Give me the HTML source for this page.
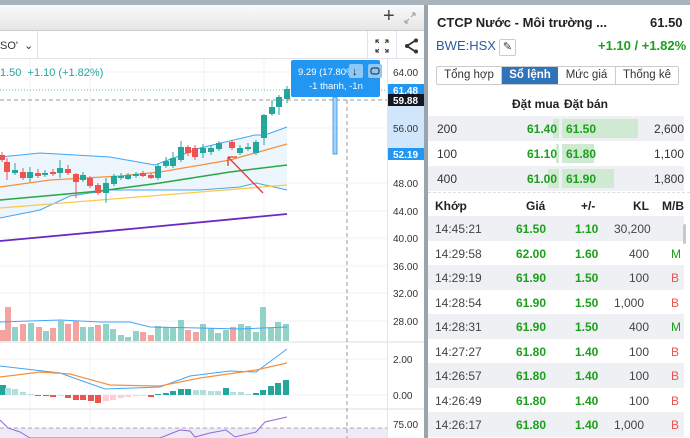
<!DOCTYPE html>
<html><head><meta charset="utf-8"><style>
*{margin:0;padding:0;box-sizing:border-box}
body{width:690px;height:438px;overflow:hidden;background:#a9b3bc;font-family:"Liberation Sans",sans-serif;position:relative}
.abs{position:absolute}
#left{left:0;top:5px;width:424px;height:433px;background:#fff}
#hdr{left:0;top:0;width:424px;height:26px;background:linear-gradient(#fafafa,#e6e6e6);border-bottom:1px solid #ccc}
#tb{left:0;top:26px;width:424px;height:28px;background:#fff;border-bottom:1px solid #e0e3eb}
#right{left:428px;top:5px;width:262px;height:433px;background:#fff}
.t{position:absolute;white-space:nowrap}
.g{color:#1aa01a;font-weight:bold}
.row{position:absolute;left:0;width:256px;height:24.5px;font-size:12px}
.row span{position:absolute;top:6px}
</style></head><body>
<div id="left" class="abs">
 <div id="hdr" class="abs">
  <div class="t" style="left:383px;top:0;font-size:20px;color:#444">+</div>
  <svg class="abs" style="left:403px;top:6px" width="14" height="14"><path d="M2 12 L6 8 M2 12 L2 9 M2 12 L5 12 M12 2 L8 6 M12 2 L9 2 M12 2 L12 5" stroke="#aaa" stroke-width="1.3" fill="none"/></svg>
 </div>
 <div id="tb" class="abs">
  <div class="t" style="left:0;top:8px;font-size:11px;color:#333">SO' &nbsp;⌄</div>
  <div class="abs" style="left:37px;top:0;width:1px;height:28px;background:#e0e3eb"></div>
  <div class="abs" style="left:367px;top:0;width:1px;height:28px;background:#e0e3eb"></div>
  <div class="abs" style="left:396px;top:0;width:1px;height:28px;background:#e0e3eb"></div>
  <svg class="abs" style="left:375px;top:8px" width="14" height="14"><path d="M1 4V1H4M10 1H13V4M13 10V13H10M4 13H1V10M1 1L4 4M13 1L10 4M13 13L10 10M1 13L4 10" stroke="#333" stroke-width="1.1" fill="none"/></svg>
  <svg class="abs" style="left:404px;top:7px" width="14" height="16"><path d="M12 2L3 8L12 14" stroke="#333" stroke-width="1.8" fill="none"/><circle cx="12" cy="2.5" r="2" fill="#333"/><circle cx="3" cy="8" r="2" fill="#333"/><circle cx="12" cy="13.5" r="2" fill="#333"/></svg>
 </div>
</div>
<div class="abs" style="left:424px;top:5px;width:4px;height:433px;background:#9aa4ad"></div>
<svg class="abs" style="left:0;top:0" width="424" height="438">
 <g stroke="#f0f2f5" stroke-width="1">
  <path d="M30 59V438M90 59V438M204 59V438M264 59V438"/>
  <path d="M0 72H387M0 128H387M0 183H387M0 211H387M0 238H387M0 266H387M0 293H387M0 321H387M0 359H387M0 395H387"/>
 </g>
 <path d="M0 342H424M0 409H424" stroke="#ddd"/>
 <rect x="387" y="59" width="1" height="379" fill="#e0e3eb"/>
 <rect x="388" y="84" width="36" height="76" fill="#cfe6fb"/>
 <rect x="0" y="428" width="387" height="10" fill="#efeaf8"/>
 <path d="M0 428H387" stroke="#aaa" stroke-dasharray="4 3"/>
 <path d="M0 90H387" stroke="#26a69a" stroke-dasharray="1 2" opacity=".7"/>
 <path d="M0 100H387" stroke="#999" stroke-dasharray="4 3"/>
 <path d="M347 100V438" stroke="#999" stroke-dasharray="4 3"/>
 <rect x="333" y="97" width="4" height="57" fill="#a8d3f7" stroke="#2196f3" stroke-width=".8"/>
 <path d="M0 157 L40 153 L110 157 L155 165 L200 148 L255 135 L265 135 L287 127 L287 190 L256 183 L240 187 L200 190 L110 190 L70 196 L40 210 L0 218Z" fill="#e8f3fd" opacity=".8"/>
 <polyline points="0,157 40,153 110,157 155,165 200,148 255,135 265,135 287,127" fill="none" stroke="#42a5f5" stroke-width="1"/>
 <polyline points="0,218 40,210 70,196 110,190 200,190 240,187 256,183 287,190" fill="none" stroke="#42a5f5" stroke-width="1"/>
 <polyline points="0,187 50,180 120,176 160,172 230,160 287,144" fill="none" stroke="#f7913d" stroke-width="1.3"/>
 <polyline points="0,200 100,191 160,183 230,172 287,165" fill="none" stroke="#28a745" stroke-width="1.5"/>
 <polyline points="0,208 100,200 200,192 287,185" fill="none" stroke="#fbc94b" stroke-width="1.3"/>
 <polyline points="0,241 130,229 287,214" fill="none" stroke="#6a2ac0" stroke-width="1.8"/>
 <g id="candles"></g>
 <path d="M263 193 L228 157 M228 157 L228 166 M228 157 L237 157" stroke="#e53935" stroke-width="1.3" fill="none"/>
 <polyline points="0,322 60,320 100,322 130,322 150,327 200,328 240,329 287,327" fill="none" stroke="#42a5f5" stroke-width="1"/>
 <polyline points="0,366 60,373 105,389 160,387 190,376 230,371 256,372 287,349" fill="none" stroke="#42a5f5" stroke-width="1"/>
 <polyline points="0,377 40,372 70,374 110,385 160,386 200,378 256,370 287,363" fill="none" stroke="#f7913d" stroke-width="1.2"/>
 <polyline points="0,420 8,428 20,432 30,438 160,438 180,430 190,431 195,437 210,433 226,430 235,437 256,432 265,422 287,417" fill="none" stroke="#8e6bd8" stroke-width="1"/>
 <g font-size="10" fill="#333" font-family="Liberation Sans">
  <text x="393" y="76">64.00</text><text x="393" y="132">56.00</text><text x="393" y="187">48.00</text><text x="393" y="215">44.00</text><text x="393" y="242">40.00</text><text x="393" y="270">36.00</text><text x="393" y="297">32.00</text><text x="393" y="325">28.00</text><text x="393" y="363">2.00</text><text x="393" y="399">0.00</text><text x="393" y="428">75.00</text>
 </g>
 <rect x="388" y="84" width="36" height="13" fill="#2196f3"/><text x="393" y="94" font-size="10" fill="#fff" font-weight="bold">61.48</text>
 <rect x="388" y="94" width="36" height="12" fill="#131722"/><text x="393" y="104" font-size="10" fill="#fff" font-weight="bold">59.88</text>
 <rect x="388" y="148" width="36" height="12" fill="#2196f3"/><text x="393" y="158" font-size="10" fill="#fff" font-weight="bold">52.19</text>
 <rect x="291" y="60" width="89" height="37" rx="2" fill="#2196f3"/>
 <text x="298" y="75" font-size="9.5" fill="#fff">9.29 (17.80%</text>
 <text x="309" y="89" font-size="9.5" fill="#fff">-1 thanh, -1n</text>
 <rect x="349" y="64" width="14" height="14" rx="2" fill="#8ec8f7"/><text x="352" y="75" font-size="11" fill="#222">↓</text>
 <rect x="368" y="64" width="14" height="14" rx="2" fill="#8ec8f7"/><rect x="371" y="68" width="8" height="6" rx="2" fill="none" stroke="#222"/>
 <text x="0" y="76" font-size="11" fill="#26a69a">1.50 &#160;+1.10 (+1.82%)</text>
</svg>
<script>
var C=[[2,155,160,152,162,'r'],[7,162,172,158,180,'r'],[15,170,173,163,175,'g'],[23,172,178,168,180,'r'],[30,172,178,167,182,'g'],[38,173,176,169,178,'r'],[45,173,175,170,177,'g'],[53,172,174,169,176,'r'],[60,168,173,160,178,'g'],[68,169,173,165,175,'r'],[76,174,182,173,198,'r'],[83,175,180,172,182,'g'],[90,178,186,176,188,'r'],[98,185,193,183,195,'r'],[106,183,193,178,203,'g'],[114,176,184,174,186,'g'],[121,176,178,173,180,'g'],[128,175,179,173,180,'g'],[136,174,176,172,178,'g'],[143,173,176,171,177,'r'],[151,175,178,173,179,'r'],[158,166,178,164,180,'g'],[166,161,166,157,168,'g'],[173,158,166,152,168,'g'],[181,147,160,141,162,'g'],[188,147,153,145,156,'r'],[195,148,157,145,160,'r'],[203,148,153,144,158,'g'],[211,148,152,145,155,'g'],[219,143,149,141,151,'g'],[232,142,148,140,150,'r'],[240,148,153,145,155,'g'],[248,147,149,143,151,'g'],[256,142,153,140,155,'g'],[264,115,138,114,145,'g'],[272,107,114,100,116,'g'],[279,97,107,95,115,'g'],[287,89,99,86,103,'g']];
var V=[[0,330,'r'],[5,307,'r'],[12,327,'g'],[20,324,'r'],[28,323,'g'],[36,327,'r'],[43,331,'g'],[50,328,'r'],[58,321,'g'],[65,324,'r'],[73,321,'r'],[80,327,'g'],[88,327,'g'],[95,325,'r'],[103,324,'g'],[110,329,'g'],[118,335,'g'],[125,337,'g'],[133,331,'g'],[140,332,'r'],[148,335,'r'],[155,326,'g'],[163,327,'g'],[170,327,'g'],[178,320,'g'],[185,330,'r'],[193,332,'r'],[200,324,'g'],[208,328,'g'],[215,333,'g'],[223,330,'g'],[230,327,'r'],[238,324,'g'],[245,326,'g'],[253,332,'g'],[260,307,'g'],[268,328,'g'],[275,322,'g'],[283,324,'g']];
var M=[[0,385,'#26a69a'],[5,388,'#b2dfdb'],[12,389,'#b2dfdb'],[20,392,'#b2dfdb'],[28,394,'#b2dfdb'],[35,396,'#ef5350'],[43,396,'#ef5350'],[50,397,'#ef5350'],[58,396,'#ffcdd2'],[65,398,'#ef5350'],[73,400,'#ef5350'],[80,400,'#ef5350'],[88,401,'#ef5350'],[95,403,'#ef5350'],[103,401,'#ffcdd2'],[110,400,'#ffcdd2'],[118,398,'#ffcdd2'],[125,397,'#ffcdd2'],[133,396,'#ffcdd2'],[140,396,'#ffcdd2'],[148,397,'#ef5350'],[155,394,'#26a69a'],[163,393,'#26a69a'],[170,391,'#26a69a'],[178,389,'#26a69a'],[185,389,'#26a69a'],[193,390,'#b2dfdb'],[200,390,'#b2dfdb'],[208,391,'#b2dfdb'],[215,391,'#b2dfdb'],[223,388,'#26a69a'],[230,392,'#b2dfdb'],[238,392,'#b2dfdb'],[245,394,'#b2dfdb'],[253,393,'#26a69a'],[260,390,'#26a69a'],[268,386,'#26a69a'],[275,383,'#26a69a'],[283,380,'#26a69a']];
var s='';
V.forEach(function(v){var c=v[2]=='r'?'#f4a3a0':'#92d2c9';s+='<rect x="'+v[0]+'" y="'+v[1]+'" width="6" height="'+(341-v[1])+'" fill="'+c+'"/>';});
M.forEach(function(m){var y=Math.min(m[1],395),h=Math.max(Math.abs(395-m[1]),1);s+='<rect x="'+m[0]+'" y="'+y+'" width="6" height="'+h+'" fill="'+m[2]+'"/>';});
C.forEach(function(c){var col=c[5]=='r'?'#ef5350':'#26a69a';s+='<line x1="'+c[0]+'" x2="'+c[0]+'" y1="'+c[3]+'" y2="'+c[4]+'" stroke="'+col+'"/><rect x="'+(c[0]-3)+'" y="'+c[1]+'" width="6" height="'+(c[2]-c[1])+'" fill="'+col+'"/>';});
document.getElementById('candles').innerHTML=s;
</script>
<div id="right" class="abs">
 <div class="t" style="left:9px;top:10px;font-size:13px;font-weight:bold;color:#222">CTCP Nước - Môi trường ...</div>
 <div class="t" style="left:222px;top:10px;font-size:13px;font-weight:bold;color:#222">61.50</div>
 <div class="t" style="left:8px;top:33px;font-size:13px;color:#2a5d9f">BWE:HSX</div>
 <div class="abs" style="left:71px;top:34px;width:17px;height:17px;border:1px solid #ccc;border-radius:2px;font-size:11px;text-align:center;line-height:15px;color:#333">✎</div>
 <div class="t" style="left:170px;top:33px;font-size:13px;font-weight:bold;color:#1aa01a">+1.10 / +1.82%</div>
 <div class="abs" style="left:8px;top:61px;width:243px;height:19px;border:1px solid #ccc;border-radius:2px;display:flex;font-size:11.5px">
  <div style="width:65px;text-align:center;line-height:17px;color:#333;border-right:1px solid #ccc">Tổng hợp</div>
  <div style="width:56px;text-align:center;line-height:17px;color:#fff;background:#2f73b8;font-weight:bold">Sổ lệnh</div>
  <div style="width:58px;text-align:center;line-height:17px;color:#333;border-right:1px solid #ccc">Mức giá</div>
  <div style="flex:1;text-align:center;line-height:17px;color:#333">Thống kê</div>
 </div>
 <div class="t" style="left:84px;top:92px;font-size:12px;font-weight:bold;color:#222">Đặt mua</div>
 <div class="t" style="left:136px;top:92px;font-size:12px;font-weight:bold;color:#222">Đặt bán</div>
 <div class="row" style="top:111px;background:#eef0f3;height:25px"><div class="abs" style="left:125px;top:3px;width:6px;height:19px;background:#cfe9d2"></div><div class="abs" style="left:134px;top:3px;width:76px;height:19px;background:#cfe9d2"></div><span style="left:9px;color:#333">200</span><span class="g" style="left:99px">61.40</span><span class="g" style="left:138px">61.50</span><span style="left:226px;color:#333">2,600</span></div>
 <div class="row" style="top:136px;height:25px"><div class="abs" style="left:128px;top:3px;width:3px;height:19px;background:#cfe9d2"></div><div class="abs" style="left:134px;top:3px;width:32px;height:19px;background:#cfe9d2"></div><span style="left:9px;color:#333">100</span><span class="g" style="left:99px">61.10</span><span class="g" style="left:138px">61.80</span><span style="left:226px;color:#333">1,100</span></div>
 <div class="row" style="top:161px;background:#eef0f3;height:25px"><div class="abs" style="left:120px;top:3px;width:11px;height:19px;background:#cfe9d2"></div><div class="abs" style="left:134px;top:3px;width:52px;height:19px;background:#cfe9d2"></div><span style="left:9px;color:#333">400</span><span class="g" style="left:99px">61.00</span><span class="g" style="left:138px">61.90</span><span style="left:226px;color:#333">1,800</span></div>
 <div class="abs" style="left:0;top:187px;width:262px;border-top:1px dashed #ddd"></div>
 <div class="row" style="top:188px;font-weight:bold;color:#222"><span style="left:7px">Khớp</span><span style="left:98px">Giá</span><span style="left:153px">+/-</span><span style="left:205px">KL</span><span style="left:234px">M/B</span></div>
 <div id="trades"></div>
 <div class="abs" style="left:255px;top:219px;width:3px;height:20px;background:#c8c8c8;border-radius:2px"></div>
</div>
<script>
var T=[["14:45:21","61.50","1.10","30,200",""],["14:29:58","62.00","1.60","400","M"],["14:29:19","61.90","1.50","100","B"],["14:28:54","61.90","1.50","1,000","B"],["14:28:31","61.90","1.50","400","M"],["14:27:27","61.80","1.40","100","B"],["14:26:57","61.80","1.40","100","B"],["14:26:49","61.80","1.40","100","B"],["14:26:17","61.80","1.40","1,000","B"]];
var h='';T.forEach(function(r,i){var top=211+i*24.5;h+='<div class="row" style="top:'+top+'px;'+(i%2==0?'background:#eef0f3':'')+'"><span style="left:7px;color:#444">'+r[0]+'</span><span class="g" style="left:88px">'+r[1]+'</span><span class="g" style="left:147px">'+r[2]+'</span><span style="left:'+(r[3].length>4?186:(r[3].length>3?193:201))+'px;color:#444">'+r[3]+'</span><span style="left:243px;color:'+(r[4]=="M"?'#1aa01a':'#ef5350')+'">'+r[4]+'</span></div>';});
document.getElementById('trades').innerHTML=h;
</script>
</body></html>
